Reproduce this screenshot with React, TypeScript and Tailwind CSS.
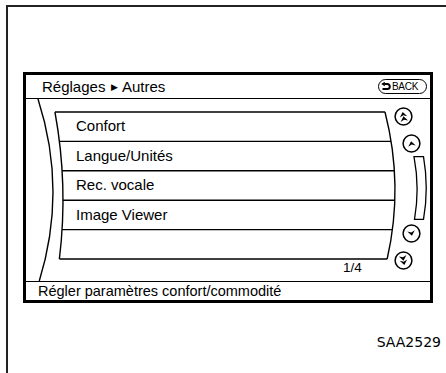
import React from 'react';

// parabola-shaped arc x = xm - (y - yc)^2 / k, drawn as one quadratic curve
const curveX = (xm: number, yc: number, k: number) => (y: number) => xm - ((y - yc) ** 2) / k;

const arcPath = (xm: number, yc: number, k: number, y0: number, y1: number) => {
  const x = curveX(xm, yc, k);
  const slope = -2 * (y0 - yc) / k;
  const ym = (y0 + y1) / 2;
  const cx = x(y0) + slope * (ym - y0);
  return `M${x(y0)} ${y0} Q${cx} ${ym} ${x(y1)} ${y1}`;
};

const LIST_TOP = 112;
const ROW_H = 29.4;
const ROWS = ['Confort', 'Langue/Unités', 'Rec. vocale', 'Image Viewer', ''];
const LIST_BOTTOM = LIST_TOP + ROW_H * ROWS.length;

const leftEdge = curveX(63, 200, 961);
const rightEdge = curveX(395, 190, 608);

const Arrow = ({ y = 0 }: { y?: number }) => (
  <path d={`M-3.8 ${y + 2.3} L0 ${y - 2.7} L3.8 ${y + 2.3} L0 ${y + 0.7} Z`} fill="black" />
);

const RoundButton = ({ double, down, className }: { double?: boolean; down?: boolean; className: string }) => (
  <div className={className}>
    <svg width="19" height="19" viewBox="-9.5 -9.5 19 19">
      <circle cx="0" cy="0" r="8.4" fill="white" stroke="black" strokeWidth="1.5" />
      <g transform={down ? 'rotate(170)' : 'rotate(-10)'}>
        {double ? (
          <>
            <Arrow y={-1.9} />
            <Arrow y={2.5} />
          </>
        ) : (
          <Arrow y={0.4} />
        )}
      </g>
    </svg>
  </div>
);

const ListLines = () => (
  <svg className="absolute inset-0 pointer-events-none" width="404" height="182" viewBox="26 99 404 182">
    <g fill="none" stroke="black" strokeWidth="1.4">
      <path d={arcPath(53, 192, 577, 99, 281)} />
      <path d={arcPath(63, 200, 961, LIST_TOP, LIST_BOTTOM)} />
      <path d={arcPath(395, 190, 608, LIST_TOP, LIST_BOTTOM)} />
      {ROWS.map((_, i) => {
        const y = LIST_TOP + ROW_H * i;
        return <line key={i} x1={leftEdge(y)} y1={y} x2={rightEdge(y)} y2={y} />;
      })}
      <line x1={leftEdge(LIST_BOTTOM)} y1={LIST_BOTTOM} x2={rightEdge(LIST_BOTTOM)} y2={LIST_BOTTOM} />
    </g>
  </svg>
);

export default function App() {
  return (
    <div className="w-[446px] h-[373px] bg-white overflow-hidden text-black font-['Liberation_Sans',Arial,sans-serif]">
      <div className="ml-[6px] mt-[5px] w-[440px] h-[368px] border-l-2 border-t-2 border-[#222]">
        <div className="ml-[15px] mt-[65px] w-[410px] h-[231px] border-[3px] border-black flex flex-col">
          {/* header */}
          <div className="h-[24px] shrink-0 border-b-[1.5px] border-black flex items-center justify-between pl-[16px] pr-[3px]">
            <span className="text-[15px] leading-none">
              Réglages <span className="text-[9px] align-[2px] px-[1px]">▶</span> Autres
            </span>
            <div className="h-[15px] w-[49px] rounded-full border-[1.5px] border-black flex items-center gap-[1px] pl-[2px]">
              <svg width="10" height="9" viewBox="0 0 10 9">
                <path d="M3.4 2 H6.3 A2.5 2.5 0 0 1 6.3 7 H1.5" fill="none" stroke="black" strokeWidth="2" />
                <path d="M0.2 2 L3.8 -0.3 L3.8 4.3 Z" fill="black" />
              </svg>
              <span className="text-[10px] leading-none tracking-[-0.3px]">BACK</span>
            </div>
          </div>

          {/* list area */}
          <div className="relative h-[182px] shrink-0 flex">
            <ListLines />
            <div className="relative w-[366px] pt-[13px]">
              {ROWS.map((label, i) => (
                <div key={i} className="h-[29.4px] flex items-center pl-[50px] text-[15px]">
                  {label}
                </div>
              ))}
              <div className="ml-[317px] h-[18px] leading-[18px] text-[13.5px]">1/4</div>
            </div>
            <div className="relative flex-1 flex flex-col">
              <RoundButton double className="ml-[2px] mt-[8px] h-[19px]" />
              <RoundButton className="ml-[10px] mt-[8px] h-[19px]" />
              <div className="ml-[21px] mt-[3px] h-[64px]">
                <svg width="14" height="64" viewBox="0 0 14 64">
                  <path d="M1 0.7 L10.5 0.7 Q16 32 10.5 63.3 L1.5 63.3 Q7 32 1 0.7 Z" fill="white" stroke="black" strokeWidth="1.3" />
                </svg>
              </div>
              <RoundButton down className="ml-[10px] mt-[4px] h-[19px]" />
              <RoundButton down double className="ml-[2px] mt-[8px] h-[19px]" />
            </div>
          </div>

          {/* footer */}
          <div className="flex-1 border-t-[1.5px] border-black flex items-center pl-[12px] text-[14.5px] leading-none">
            Régler paramètres confort/commodité
          </div>
        </div>

        <div className="mt-[32px] pr-[5px] text-right text-[14px] leading-none font-['DejaVu_Sans',sans-serif]">
          SAA2529
        </div>
      </div>
    </div>
  );
}
